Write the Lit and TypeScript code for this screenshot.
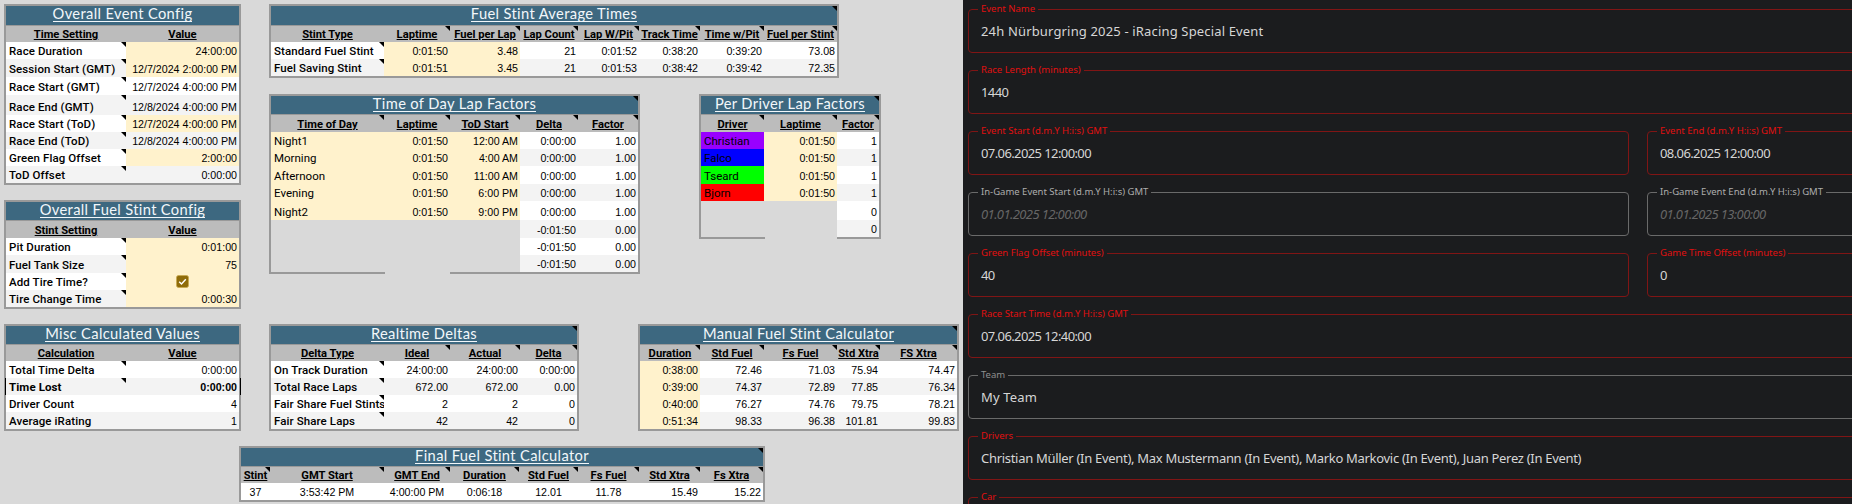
import { LitElement, html, css } from "lit";
import { customElement } from "lit/decorators.js";

type Cell = [string, string];
interface Row { h: number; cells: Cell[]; cls?: string }
interface Panel {
  title: string; titleH: number; headH: number; cols: number[];
  titleTri?: boolean; head: Cell[]; rows: Row[]; foot?: [number, boolean][];
}
const r = (h: number, ...cells: Cell[]): Row => ({ h, cells });

const eventCfg: Panel = {
  title: "Overall Event Config", titleH: 19, headH: 16, cols: [120, 113],
  head: [["Time Setting", ""], ["Value", ""]],
  rows: [
    r(17, ["Race Duration", "lbl w t"], ["24:00:00", "num y"]),
    r(18, ["Session Start (GMT)", "lbl a t"], ["12/7/2024 2:00:00 PM", "num y"]),
    r(18, ["Race Start (GMT)", "lbl w t"], ["12/7/2024 4:00:00 PM", "num w"]),
    r(20, ["Race End (GMT)", "lbl a t"], ["12/8/2024 4:00:00 PM", "num a"]),
    r(17, ["Race Start (ToD)", "lbl w t"], ["12/7/2024 4:00:00 PM", "num y"]),
    r(17, ["Race End (ToD)", "lbl a t"], ["12/8/2024 4:00:00 PM", "num a"]),
    r(17, ["Green Flag Offset", "lbl w t"], ["2:00:00", "num y"]),
    r(17, ["ToD Offset", "lbl a t"], ["0:00:00", "num a"]),
  ],
};
const stintCfg: Panel = {
  title: "Overall Fuel Stint Config", titleH: 18, headH: 17, cols: [120, 113],
  head: [["Stint Setting", ""], ["Value", ""]],
  rows: [
    r(17, ["Pit Duration", "lbl w t"], ["0:01:00", "num y"]),
    r(18, ["Fuel Tank Size", "lbl a t"], ["75", "num y"]),
    r(17, ["Add Tire Time?", "lbl w t"], ["", "check y"]),
    r(17, ["Tire Change Time", "lbl a t"], ["0:00:30", "num y"]),
  ],
};
const misc: Panel = {
  title: "Misc Calculated Values", titleH: 18, headH: 16, cols: [120, 113],
  head: [["Calculation", ""], ["Value", ""]],
  rows: [
    r(17, ["Total Time Delta", "lbl w t"], ["0:00:00", "num w"]),
    { h: 17, cls: "marked", cells: [["Time Lost", "lbl a t strong"], ["0:00:00", "num a strong"]] },
    r(17, ["Driver Count", "lbl w"], ["4", "num w"]),
    r(17, ["Average iRating", "lbl a"], ["1", "num a"]),
  ],
};
const averages: Panel = {
  title: "Fuel Stint Average Times", titleH: 19, headH: 16, titleTri: true,
  cols: [113, 66, 70, 58, 61, 61, 64, 73],
  head: [["Stint Type", ""], ["Laptime", "t"], ["Fuel per Lap", "t"], ["Lap Count", "t"], ["Lap W/Pit", "t"], ["Track Time", "t"], ["Time w/Pit", "t"], ["Fuel per Stint", "t"]],
  rows: [
    r(17, ["Standard Fuel Stint", "lbl w t"], ["0:01:50", "num y"], ["3.48", "num y"], ["21", "num w"], ["0:01:52", "num w"], ["0:38:20", "num w"], ["0:39:20", "num w"], ["73.08", "num w"]),
    r(17, ["Fuel Saving Stint", "lbl a t"], ["0:01:51", "num y"], ["3.45", "num y"], ["21", "num a"], ["0:01:53", "num a"], ["0:38:42", "num a"], ["0:39:42", "num a"], ["72.35", "num a"]),
  ],
};
const tod: Panel = {
  title: "Time of Day Lap Factors", titleH: 18, headH: 17, titleTri: true,
  cols: [113, 66, 70, 58, 60],
  head: [["Time of Day", "t"], ["Laptime", "t"], ["ToD Start", "t"], ["Delta", "t"], ["Factor", "t"]],
  rows: [
    r(17, ["Night1", "txt y"], ["0:01:50", "num y"], ["12:00 AM", "num y"], ["0:00:00", "num w"], ["1.00", "num w"]),
    r(17, ["Morning", "txt y"], ["0:01:50", "num y"], ["4:00 AM", "num y"], ["0:00:00", "num a"], ["1.00", "num a"]),
    r(18, ["Afternoon", "txt y"], ["0:01:50", "num y"], ["11:00 AM", "num y"], ["0:00:00", "num w"], ["1.00", "num w"]),
    r(17, ["Evening", "txt y"], ["0:01:50", "num y"], ["6:00 PM", "num y"], ["0:00:00", "num a"], ["1.00", "num a"]),
    r(19, ["Night2", "txt y"], ["0:01:50", "num y"], ["9:00 PM", "num y"], ["0:00:00", "num w"], ["1.00", "num w"]),
    r(18, ["", ""], ["", ""], ["", ""], ["-0:01:50", "num a"], ["0.00", "num a"]),
    r(17, ["", ""], ["", ""], ["", ""], ["-0:01:50", "num w"], ["0.00", "num w"]),
    r(17, ["", ""], ["", ""], ["", ""], ["-0:01:50", "num a"], ["0.00", "num a"]),
  ],
  foot: [[114, true], [65, false], [188, true]],
};
const drivers: Panel = {
  title: "Per Driver Lap Factors", titleH: 18, headH: 17, titleTri: true,
  cols: [63, 73, 42],
  head: [["Driver", "t"], ["Laptime", "t"], ["Factor", "t"]],
  rows: [
    r(17, ["Christian", "txt purple"], ["0:01:50", "num y"], ["1", "num w"]),
    r(17, ["Falco", "txt blue"], ["0:01:50", "num y"], ["1", "num a"]),
    r(18, ["Tseard", "txt green"], ["0:01:50", "num y"], ["1", "num w"]),
    r(17, ["Bjorn", "txt red"], ["0:01:50", "num y"], ["1", "num a"]),
    r(19, ["", ""], ["", ""], ["0", "num w"]),
    r(17, ["", ""], ["", ""], ["0", "num a"]),
  ],
  foot: [[64, true], [72, false], [42, true]],
};
const deltas: Panel = {
  title: "Realtime Deltas", titleH: 18, headH: 16, titleTri: true,
  cols: [113, 66, 70, 57],
  head: [["Delta Type", ""], ["Ideal", "t"], ["Actual", "t"], ["Delta", "t"]],
  rows: [
    r(17, ["On Track Duration", "lbl w t"], ["24:00:00", "num w"], ["24:00:00", "num w"], ["0:00:00", "num w"]),
    r(17, ["Total Race Laps", "lbl a t"], ["672.00", "num a"], ["672.00", "num a"], ["0.00", "num a"]),
    r(17, ["Fair Share Fuel Stints", "lbl w t"], ["2", "num w"], ["2", "num w"], ["0", "num w"]),
    r(17, ["Fair Share Laps", "lbl a t"], ["42", "num a"], ["42", "num a"], ["0", "num a"]),
  ],
};
const manual: Panel = {
  title: "Manual Fuel Stint Calculator", titleH: 18, headH: 16, titleTri: true,
  cols: [60, 64, 73, 43, 77],
  head: [["Duration", "t"], ["Std Fuel", "t"], ["Fs Fuel", "t"], ["Std Xtra", "t"], ["FS Xtra", "t"]],
  rows: [
    r(17, ["0:38:00", "num y"], ["72.46", "num w"], ["71.03", "num w"], ["75.94", "num w"], ["74.47", "num w"]),
    r(17, ["0:39:00", "num y"], ["74.37", "num a"], ["72.89", "num a"], ["77.85", "num a"], ["76.34", "num a"]),
    r(17, ["0:40:00", "num y"], ["76.27", "num w"], ["74.76", "num w"], ["79.75", "num w"], ["78.21", "num w"]),
    r(17, ["0:51:34", "num y"], ["98.33", "num a"], ["96.38", "num a"], ["101.81", "num a"], ["99.83", "num a"]),
  ],
};
const finalCalc: Panel = {
  title: "Final Fuel Stint Calculator", titleH: 18, headH: 16, titleTri: true,
  cols: [29, 114, 66, 69, 59, 61, 61, 63],
  head: [["Stint", "t"], ["GMT Start", "t"], ["GMT End", "t"], ["Duration", "t"], ["Std Fuel", "t"], ["Fs Fuel", "t"], ["Std Xtra", "t"], ["Fs Xtra", "t"]],
  rows: [
    r(17, ["37", "ctr w"], ["3:53:42 PM", "ctr w"], ["4:00:00 PM", "ctr w"], ["0:06:18", "ctr w"], ["12.01", "ctr w"], ["11.78", "ctr w"], ["15.49", "num w"], ["15.22", "num w"]),
  ],
};

const tpl = (cols: number[]) => `grid-template-columns:${cols.map((c) => c + "px").join(" ")}`;
const sum = (cols: number[]) => cols.reduce((a, b) => a + b, 0);

interface Field { label: string; value: string; kind?: string; half?: boolean; fit?: string }
const fields: Field[] = [
  { label: "Event Name", value: "24h Nürburgring 2025 - iRacing Special Event", fit: "wide" },
  { label: "Race Length (minutes)", value: "1440", fit: "digits" },
  { label: "Event Start (d.m.Y H:i:s) GMT", value: "07.06.2025 12:00:00", half: true, fit: "digits" },
  { label: "Event End (d.m.Y H:i:s) GMT", value: "08.06.2025 12:00:00", half: true, fit: "digits" },
  { label: "In-Game Event Start (d.m.Y H:i:s) GMT", value: "01.01.2025 12:00:00", kind: "off", half: true, fit: "digits" },
  { label: "In-Game Event End (d.m.Y H:i:s) GMT", value: "01.01.2025 13:00:00", kind: "off", half: true, fit: "digits" },
  { label: "Green Flag Offset (minutes)", value: "40", half: true, fit: "digits" },
  { label: "Game Time Offset (minutes)", value: "0", half: true, fit: "digits" },
  { label: "Race Start Time (d.m.Y H:i:s) GMT", value: "07.06.2025 12:40:00", fit: "digits" },
  { label: "Team", value: "My Team", kind: "neutral", fit: "wide" },
  { label: "Drivers", value: "Christian Müller (In Event), Max Mustermann (In Event), Marko Markovic (In Event), Juan Perez (In Event)", fit: "long" },
  { label: "Car", value: "" },
];

@customElement("app-root")
export class AppRoot extends LitElement {
  static styles = css`
    :host { display: flex; width: 1852px; height: 504px; overflow: hidden; }
    .sheet { width: 963px; height: 504px; flex: none; background: #d9d9d9; padding: 4px 0 0 4px; box-sizing: border-box;
      display: flex; flex-direction: column; gap: 15px; font-family: "Liberation Sans", Arial, sans-serif; color: #000; }
    .line { display: flex; align-items: flex-start; }
    .gap28 { gap: 28px; }
    .stack { display: flex; flex-direction: column; }
    .g15 { gap: 15px; }
    .g16 { gap: 16px; }
    .pair { display: flex; gap: 59px; align-items: flex-start; }
    .deltaline { gap: 59px; display: flex; }
    .finalline { padding-left: 235px; }

    .panel { border: 2px solid #999; flex: none; }
    .panel.open { border-bottom: 0; }
    .title { background: #3d6880; border-bottom: 1px solid #999; position: relative; box-sizing: content-box;
      display: flex; justify-content: center; align-items: flex-start; white-space: nowrap; }
    .tt { display: block; color: #f2f7fa; font: 400 14.7px/15px "Lato", sans-serif; letter-spacing: 0.35px; border-bottom: 1px solid #f2f7fa; }
    .row { display: grid; }
    .row.marked { box-shadow: -1px 0 0 #000, 1px 0 0 #999, 2px 0 0 #000; position: relative; }
    .head { background: #bcbcbc; }
    .cell { position: relative; display: flex; align-items: flex-end; font-size: 10.67px; line-height: 15px; white-space: nowrap; min-width: 0; }
    .hd { justify-content: center; font: 700 11.2px/15px "Roboto", sans-serif; text-decoration: underline; }
    .lbl { font: 500 11.5px/15px "Roboto", sans-serif; padding-left: 3px; letter-spacing: 0.1px; }
    .txt { font: 400 11.5px/15px "Roboto", sans-serif; padding-left: 3px; }
    .num { justify-content: flex-end; padding-right: 2px; }
    .ctr { justify-content: center; }
    .strong { font-weight: 700; }
    .w { background: #fff; }
    .a { background: #f3f3f3; }
    .y { background: #fff2cc; }
    .purple { background: #9900ff; }
    .blue { background: #0000ff; }
    .green { background: #00ff00; }
    .red { background: #ff0000; }
    .t::after, .title.tri::after { content: ""; position: absolute; top: 0; right: 0; width: 5px; height: 5px;
      background: #000; clip-path: polygon(0 0, 100% 0, 100% 100%); z-index: 1; }
    .check { justify-content: center; align-items: center; }
    .box { width: 13px; height: 13px; display: block; }
    .foot { display: flex; height: 2px; }
    .foot .on { background: #999; }

    .form { width: 889px; height: 504px; flex: none; background: #1b1c1e; padding: 3px 0 0 5px; box-sizing: border-box; overflow: hidden; }
    .grid { width: 1340px; display: grid; grid-template-columns: 661px 661px; column-gap: 18px; row-gap: 11px; font-family: "Noto Sans", sans-serif; }
    fieldset { margin: 0; padding: 0 12px; min-width: 0; height: 50px; box-sizing: border-box; border: 1px solid #801515; border-radius: 4px; grid-column: 1 / -1; }
    fieldset.half { grid-column: auto; }
    legend { margin-left: -3px; padding: 0 3px; font-size: 9.5px; line-height: 12px; color: #e01010; }
    .val { font-size: 13px; line-height: 32px; color: #d6d6d6; white-space: nowrap; position: relative; top: 0; }
    .val.digits { letter-spacing: -0.6px; }
    .val.wide { letter-spacing: 0.16px; }
    .val.long { letter-spacing: -0.3px; }
    fieldset.neutral, fieldset.off { border-color: #6a6a6a; }
    .neutral legend { color: #8f8f8f; }
    .off legend { color: #adadad; }
    .off .val { color: #666; font-style: italic; }
  `;

  private panel(p: Panel) {
    const width = sum(p.cols);
    return html`<div class="panel ${p.foot ? "open" : ""}" style="width:${width}px">
      <div class="title ${p.titleTri ? "tri" : ""}" style="height:${p.titleH}px"><span class="tt">${p.title}</span></div>
      <div class="row head" style="${tpl(p.cols)};height:${p.headH}px">
        ${p.head.map(([t, c]) => html`<div class="cell hd ${c}">${t}</div>`)}
      </div>
      ${p.rows.map((row) => html`<div class="row ${row.cls ?? ""}" style="${tpl(p.cols)};height:${row.h}px">
        ${row.cells.map(([t, c]) => html`<div class="cell ${c}">${c.includes("check") ? this.box() : t}</div>`)}
      </div>`)}
      ${p.foot ? html`<div class="foot">${p.foot.map(([w, on]) => html`<div class=${on ? "on" : ""} style="width:${w}px"></div>`)}</div>` : null}
    </div>`;
  }

  private box() {
    return html`<svg class="box" viewBox="0 0 13 13"><rect x="0.5" y="0.5" width="12" height="12" rx="2" fill="#8f6c0a" stroke="#c9a94e" stroke-width="0.8"/><path d="M3.2 6.8 5.5 9 9.8 4.2" fill="none" stroke="#fff" stroke-width="1.4"/></svg>`;
  }

  render() {
    return html`
      <section class="sheet">
        <div class="line gap28">
          <div class="stack g15">${this.panel(eventCfg)}${this.panel(stintCfg)}</div>
          <div class="stack g16">
            ${this.panel(averages)}
            <div class="pair">${this.panel(tod)}${this.panel(drivers)}</div>
          </div>
        </div>
        <div class="line gap28">
          ${this.panel(misc)}
          <div class="deltaline">${this.panel(deltas)}${this.panel(manual)}</div>
        </div>
        <div class="line finalline">${this.panel(finalCalc)}</div>
      </section>
      <section class="form">
        <div class="grid">
          ${fields.map((f) => html`<fieldset class="${f.half ? "half" : ""} ${f.kind ?? ""}">
            <legend>${f.label}</legend>
            <div class="val ${f.fit ?? ""}">${f.value}</div>
          </fieldset>`)}
        </div>
      </section>
    `;
  }
}
